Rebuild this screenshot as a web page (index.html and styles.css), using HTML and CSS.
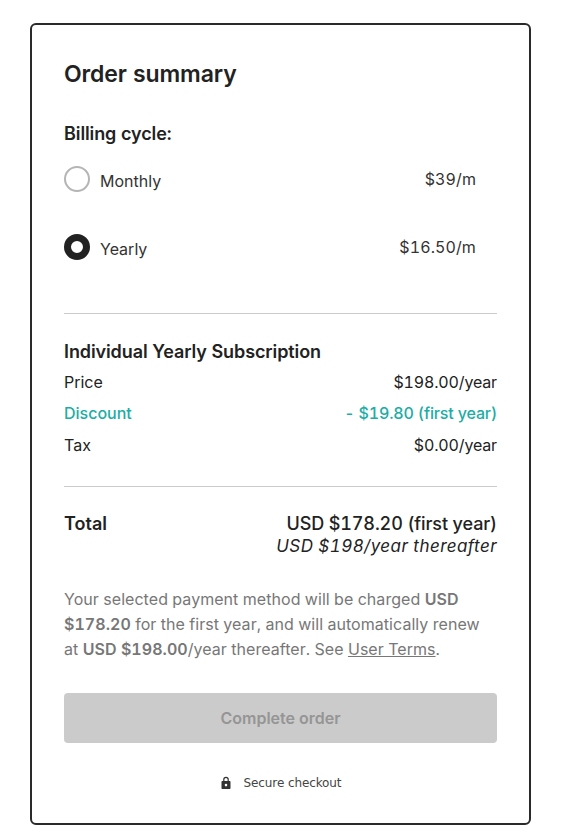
FILE: index.html
```html
<!DOCTYPE html>
<html lang="en">
<head>
    <meta charset="UTF-8">
    <title>Order summary</title>
    <link rel="stylesheet" href="styles.css">
</head>
<body>
    <div class="card">
        <h1>Order summary</h1>
        <h2 class="cycle-title">Billing cycle:</h2>
        <div class="plan plan-monthly">
            <span class="radio"></span>
            <span class="plan-name">Monthly</span>
            <span class="plan-price">$39/m</span>
        </div>
        <div class="plan plan-yearly">
            <span class="radio radio-on"></span>
            <span class="plan-name">Yearly</span>
            <span class="plan-price">$16.50/m</span>
        </div>
        <hr class="line line-first">
        <h2 class="sub-title">Individual Yearly Subscription</h2>
        <div class="row"><span>Price</span><span class="value">$198.00/year</span></div>
        <div class="row discount"><span>Discount</span><span class="value">- $19.80 (first year)</span></div>
        <div class="row"><span>Tax</span><span class="value">$0.00/year</span></div>
        <hr class="line line-second">
        <div class="total">
            <span class="total-label">Total</span>
            <div class="total-values">
                <div class="total-now">USD $178.20 (first year)</div>
                <div class="total-after">USD $198/year thereafter</div>
            </div>
        </div>
        <p class="note">Your selected payment method will be charged <b>USD $178.20</b> for the first year, and will automatically renew at <b>USD $198.00</b>/year thereafter. See <a href="#">User Terms</a>.</p>
        <button class="complete" type="button" disabled>Complete order</button>
        <div class="secure">
            <svg class="lock" viewBox="0 0 12 14" width="12" height="14">
                <path fill="#333" fill-rule="evenodd" d="M3.2 5V3.6a2.8 2.8 0 0 1 5.6 0V5h.7c.6 0 1 .4 1 1v6c0 .6-.4 1-1 1h-7c-.6 0-1-.4-1-1V6c0-.6.4-1 1-1h.7zm1.2 0h3.2V3.6a1.6 1.6 0 0 0-3.2 0V5zM6 7.8a1.3 1.3 0 1 0 0 2.6 1.3 1.3 0 0 0 0-2.6z"/>
            </svg>
            <span>Secure checkout</span>
        </div>
    </div>
</body>
</html>
```

FILE: styles.css
```css
body {
    margin: 0;
    padding: 23px 0 0 30px;
    background-color: #fff;
    color: #222;
    font-family: Inter, "Liberation Sans", sans-serif;
    font-variant-numeric: tabular-nums;
}

.card {
    box-sizing: border-box;
    width: 501px;
    height: 802px;
    padding: 35px 32px 0;
    border: 2px solid #2a2a2a;
    border-radius: 6px;
}

h1 {
    margin: 0;
    font-size: 23px;
    line-height: 28px;
    font-weight: 600;
    letter-spacing: -0.1px;
}

h2 {
    margin: 0;
    font-size: 18px;
    line-height: 22px;
    font-weight: 600;
    letter-spacing: -0.1px;
}

.cycle-title {
    margin-top: 35px;
}

.plan {
    display: flex;
    align-items: center;
    height: 26px;
    font-size: 16px;
    color: #333;
}

.plan-monthly {
    margin-top: 21px;
}

.plan-yearly {
    margin-top: 42px;
}

.radio {
    box-sizing: border-box;
    width: 26px;
    height: 26px;
    margin-right: 10px;
    border: 2px solid #b5b5b5;
    border-radius: 50%;
}

.radio-on {
    border: 7px solid #222;
}

.plan-name {
    flex: 1;
    margin-top: 4px;
}

.plan-price {
    margin: -1px 21px 0 0;
    letter-spacing: 0.1px;
}

.line {
    margin: 0;
    border: none;
    border-top: 1px solid #ccc;
}

.line-first {
    margin-top: 53px;
}

.line-second {
    margin-top: 30px;
}

.sub-title {
    margin-top: 27px;
}

.row {
    display: flex;
    justify-content: space-between;
    margin-top: 9.5px;
    font-size: 16px;
    line-height: 22px;
}

.sub-title + .row {
    margin-top: 7.5px;
}

.value {
    letter-spacing: -0.15px;
}

.discount {
    color: #20aca4;
    font-weight: 500;
}

.total {
    display: flex;
    justify-content: space-between;
    margin-top: 26px;
    font-size: 18px;
    line-height: 22px;
    font-weight: 500;
}

.total-label {
    font-weight: 600;
}

.total-values {
    text-align: right;
}

.total-now {
    letter-spacing: -0.12px;
}

.total-after {
    font-size: 17px;
    font-style: italic;
    font-weight: 400;
    letter-spacing: 0.45px;
}

.note {
    margin: 30px 0 0;
    padding-right: 15px;
    font-size: 16px;
    line-height: 25px;
    letter-spacing: 0.05px;
    color: #777;
}

.note b {
    font-weight: 600;
}

.note a {
    color: #777;
}

.complete {
    display: block;
    width: 100%;
    height: 50px;
    margin-top: 31px;
    border: none;
    border-radius: 4px;
    background-color: #cbcbcb;
    color: #959595;
    font-family: inherit;
    font-size: 16px;
    font-weight: 600;
}

.secure {
    display: flex;
    justify-content: center;
    align-items: center;
    gap: 12px;
    margin-top: 33px;
    font-family: "DejaVu Sans", sans-serif;
    font-size: 12px;
    letter-spacing: -0.1px;
    color: #444;
}
```
